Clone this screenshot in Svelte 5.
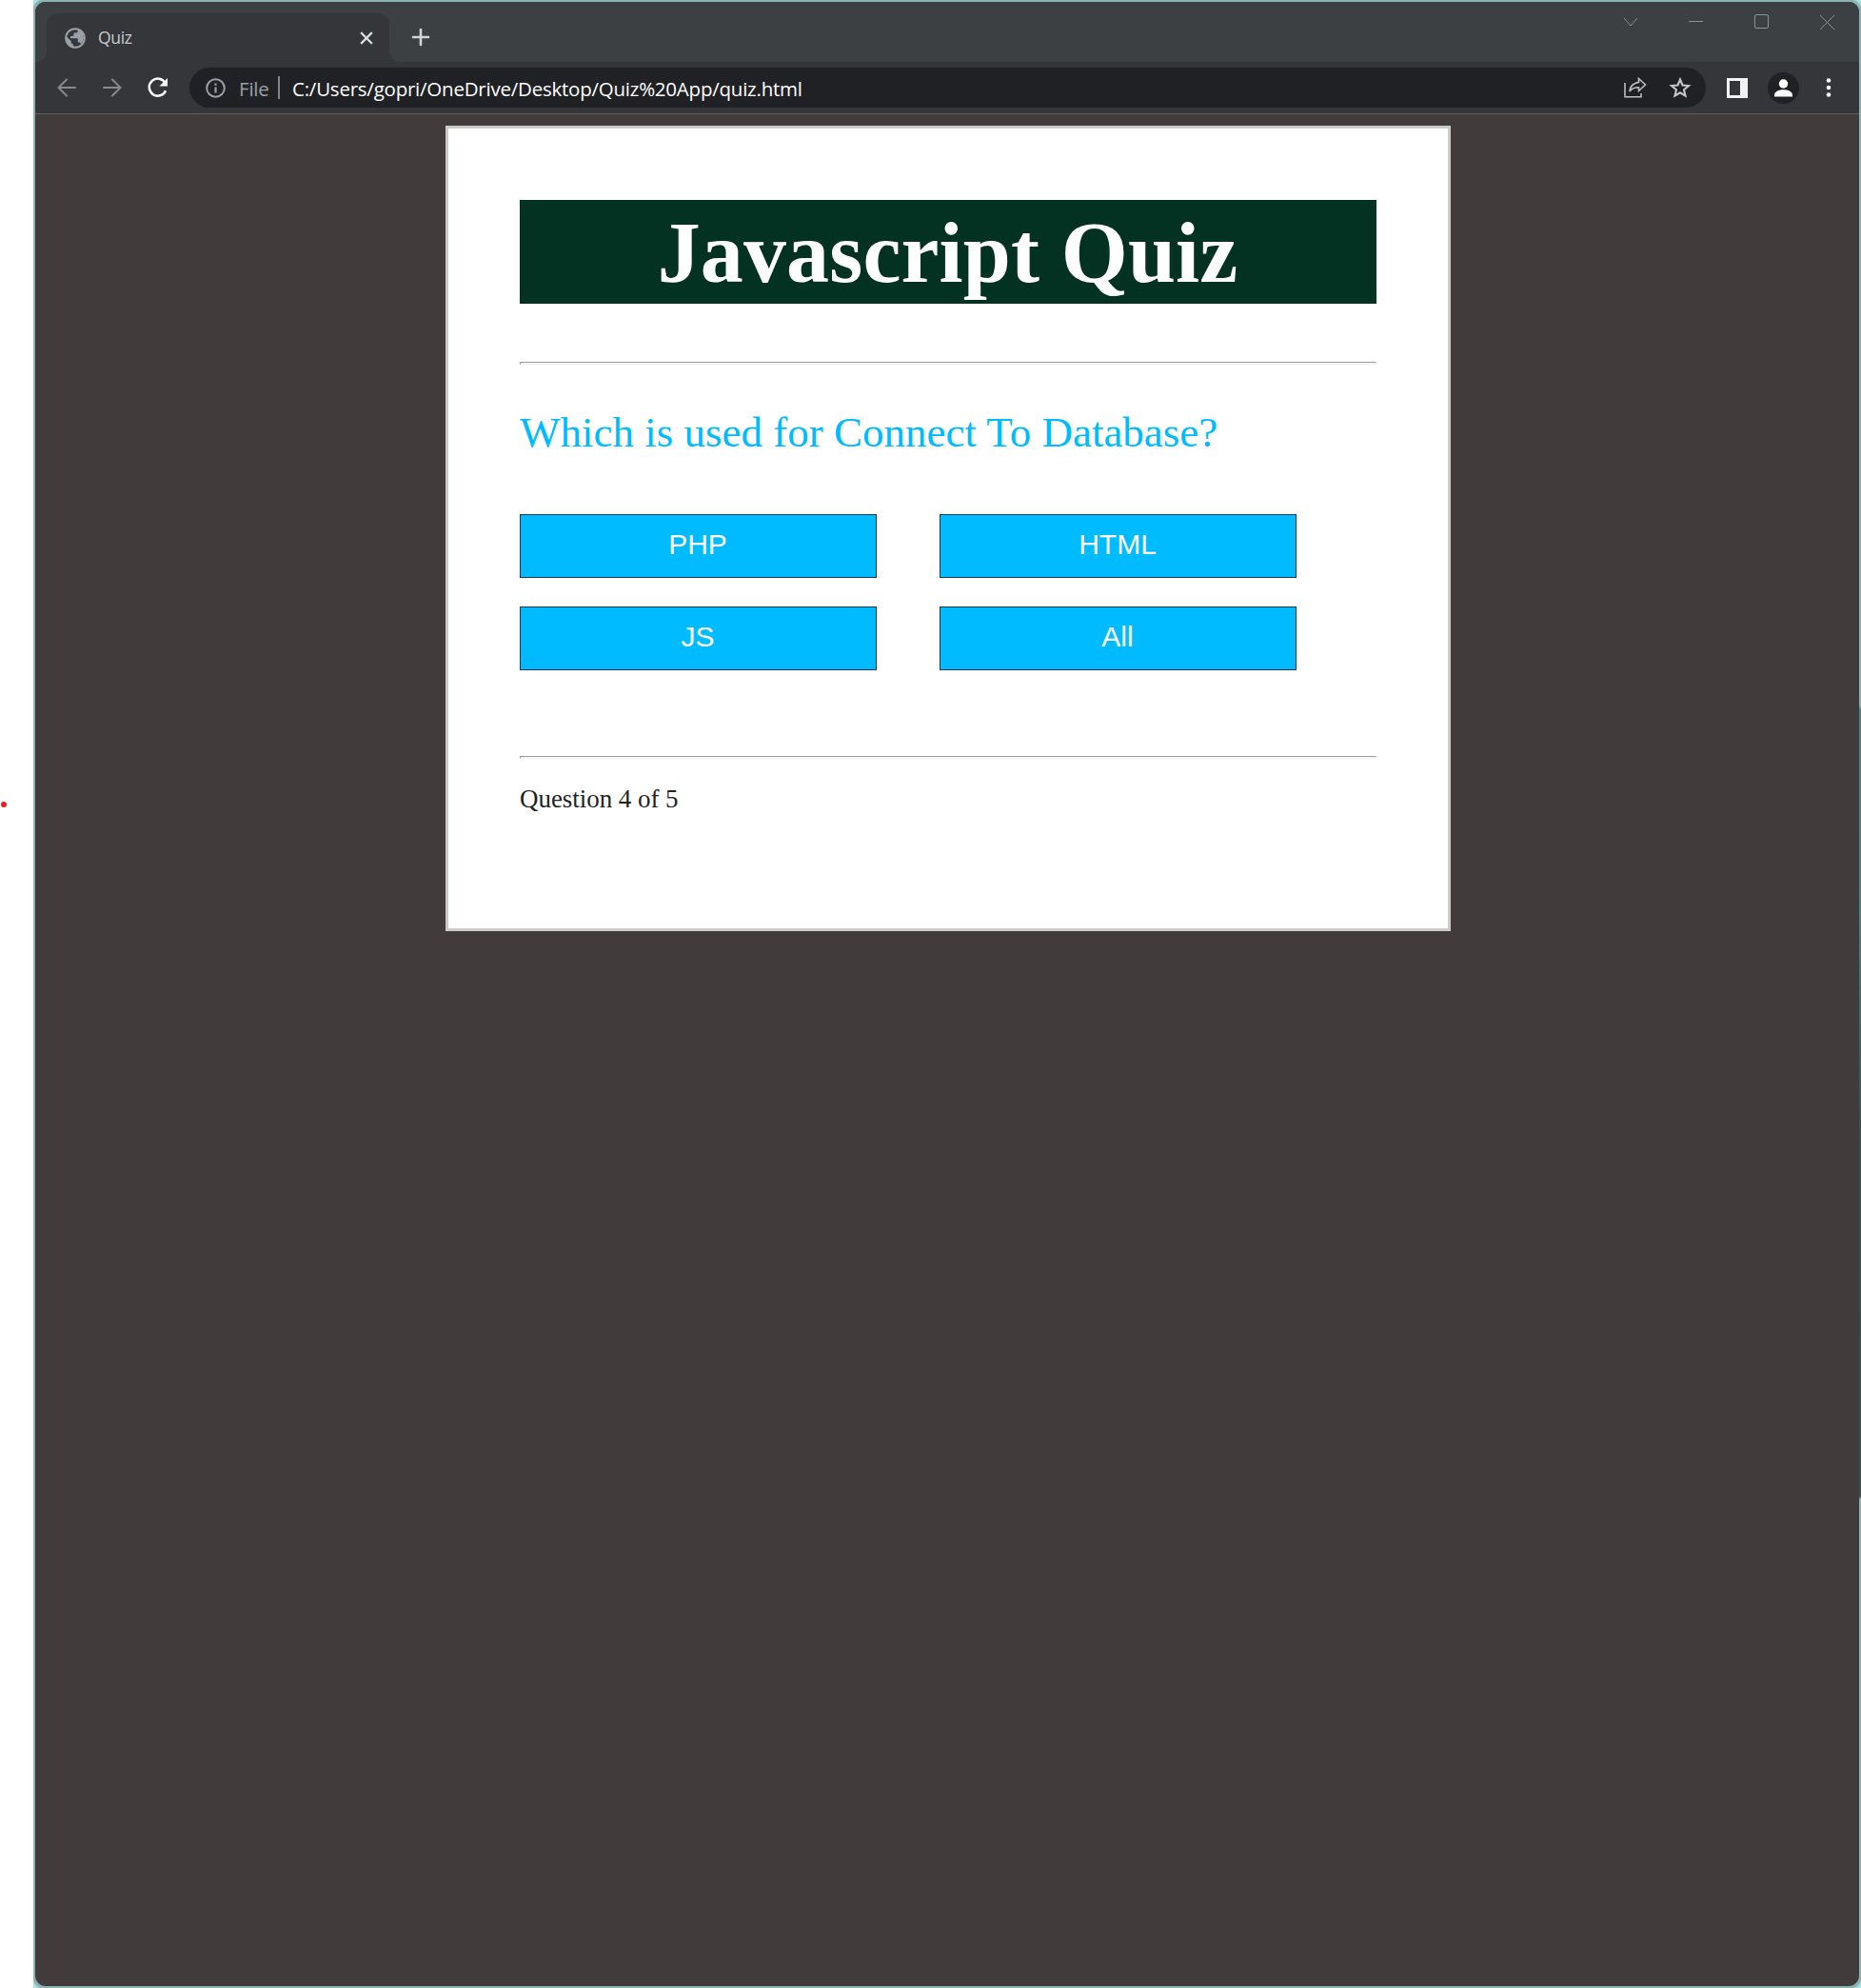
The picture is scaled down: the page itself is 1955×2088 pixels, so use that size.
<script>
  const options = ['PHP', 'HTML', 'JS', 'All'];
</script>

<div class="desktop">
  <span class="dot"></span>
  <div class="frame">
    <div class="window">
      <div class="tabs">
        <div class="tab">
          <svg class="globe" width="22" height="22" viewBox="0 0 22 22">
            <circle cx="11" cy="11" r="9.8" fill="none" stroke="#9aa0a6" stroke-width="2" />
            <path fill="#9aa0a6" d="M13.8 1.2v2.2c0 1.3-1 2.2-2.2 2.2H9.4v2.2c0 .7-.5 1.2-1.2 1.2H6v2.2h6.6c.7 0 1.2.5 1.2 1.1v3.3h1.1c1.1 0 1.9.7 2.2 1.6A9.9 9.9 0 0 0 13.8 1.2zM1.3 8.8l5.4 5.4v1c0 1.3 1 2.2 2.2 2.2v3.4A10 10 0 0 1 1.3 8.8z" />
          </svg>
          <span class="tab-title">Quiz</span>
          <svg class="close" width="12" height="12" viewBox="0 0 12 12"><path d="M1 1l10 10M11 1L1 11" stroke="#dadce0" stroke-width="2.3" stroke-linecap="square" /></svg>
        </div>
        <svg class="plus" width="18" height="18" viewBox="0 0 18 18"><path d="M9 1v16M1 9h16" stroke="#d2d4d6" stroke-width="2.6" stroke-linecap="round" /></svg>
        <svg class="controls" width="222" height="18" viewBox="0 0 222 18" fill="none" stroke="#8f9294" stroke-width="1">
          <path d="M1 5l7 8 7-8" />
          <path d="M69 8.5h15" />
          <rect x="138.5" y="1.5" width="14" height="14" rx="1.5" />
          <path d="M207 2l15 15M222 2l-15 15" />
        </svg>
      </div>

      <div class="toolbar">
        <svg class="back" width="20" height="20" viewBox="0 0 20 20"><path d="M19 10H2M10 1.5L1.5 10l8.500 8.500" fill="none" stroke="#87898c" stroke-width="2" stroke-linecap="round" /></svg>
        <svg class="forward" width="20" height="20" viewBox="0 0 20 20"><path d="M1 10h17M10 1.500l8.500 8.500-8.500 8.500" fill="none" stroke="#87898c" stroke-width="2" stroke-linecap="round" /></svg>
        <svg class="reload" width="22" height="22" viewBox="0 0 22 22">
          <path d="M18.600 6.200A9 9 0 1 0 19 14.200" fill="none" stroke="#fff" stroke-width="2.500" />
          <path d="M21 1v8.500h-8.500z" fill="#fff" />
        </svg>
        <div class="address">
          <svg class="info" width="21" height="21" viewBox="0 0 21 21">
            <circle cx="10.500" cy="10.500" r="9.300" fill="none" stroke="#9aa0a6" stroke-width="2" />
            <path d="M10.500 9.500v6M10.500 5.500v2.200" stroke="#9aa0a6" stroke-width="2.200" />
          </svg>
          <span class="file">File</span>
          <span class="divider"></span>
          <span class="url">C:/Users/gopri/OneDrive/Desktop/Quiz%20App/quiz.html</span>
          <svg class="share" width="24" height="22" viewBox="0 0 24 22" fill="none" stroke="#bdbebf" stroke-width="1.600">
            <path d="M1 6v14.800h17v-3.800" />
            <path d="M15.500 1.500L22.500 8l-7 6.500v-3.700c-4.500 0-7.500 1.200-9.700 4.200.8-5 4-8.700 9.700-9.600z" />
          </svg>
          <svg class="star" width="24" height="24" viewBox="0 0 24 24"><path d="M12 3.500l2.500 6 6.500.500-5 4.300 1.500 6.300-5.500-3.300-5.500 3.300 1.500-6.300-5-4.300 6.500-.500z" fill="none" stroke="#c6c7c8" stroke-width="2.100" /></svg>
        </div>
        <svg class="panel" width="22" height="21" viewBox="0 0 22 21"><path fill="#f1f3f4" fill-rule="evenodd" d="M0 0h22v21H0zM3 3v15h11V3z" /></svg>
        <svg class="avatar" width="33" height="33" viewBox="0 0 33 33">
          <circle cx="16.500" cy="16.500" r="16.500" fill="#202124" />
          <circle cx="16.500" cy="12" r="4.700" fill="#fff" />
          <path d="M7 25.500v-1.700c0-3.700 5-5.500 9.500-5.500s9.500 1.800 9.500 5.500v1.700z" fill="#fff" />
        </svg>
        <svg class="menu" width="6" height="20" viewBox="0 0 6 20" fill="#fff"><circle cx="3" cy="2.500" r="2.300" /><circle cx="3" cy="10" r="2.300" /><circle cx="3" cy="17.500" r="2.300" /></svg>
      </div>

      <main class="page">
        <section class="card">
          <h1>Javascript Quiz</h1>
          <hr class="first" />
          <p class="question">Which is used for Connect To Database?</p>
          <div class="options">
            {#each options as option}
              <button>{option}</button>
            {/each}
          </div>
          <hr class="second" />
          <p class="progress">Question 4 of 5</p>
        </section>
      </main>
    </div>
  </div>
</div>

<style>
  :global(body) { margin: 0; background: #fff; }
  * { box-sizing: border-box; }
  svg { display: block; flex: none; overflow: visible; }
  .desktop { position: relative; width: 1955px; height: 2088px; padding-left: 35px; background: #fff; overflow: hidden; }
  .dot { position: absolute; left: 1px; top: 842px; width: 6px; height: 6px; border-radius: 50%; background: #ed1c24; }
  .frame {
    height: 2088px;
    padding: 2px;
    background:
      radial-gradient(circle at 12px 12px, #8bb2b1 12px, #a4e6e4 14px) left top / 12px 12px no-repeat,
      radial-gradient(circle at 0 12px, #8bb2b1 12px, #a4e6e4 14px) right top / 12px 12px no-repeat,
      radial-gradient(circle at 12px 0, #8bb2b1 12px, #a4e6e4 14px) left bottom / 12px 12px no-repeat,
      radial-gradient(circle at 0 0, #8bb2b1 12px, #a4e6e4 14px) right bottom / 12px 12px no-repeat,
      linear-gradient(#8bb2b1 0 741px, #508482 745px, #4d8582 950px, #3c6462 1100px, #34514f 1200px, #34504e 1571px, #8bb2b1 1575px) right / 2px 100% no-repeat,
      #8bb2b1;
  }
  .window { height: 2084px; border-radius: 11px; overflow: hidden; background: #413c3b; font-family: "Open Sans", "Noto Sans", sans-serif; }
  .tabs { height: 63px; padding: 12px 0 0 12px; display: flex; align-items: flex-start; background: #3c4043; }
  .tab { position: relative; width: 360px; height: 51px; padding: 0 18px 0 19px; display: flex; align-items: center; background: #35363a; border-radius: 12px 12px 0 0; }
  .tab::before, .tab::after { content: ""; position: absolute; bottom: 0; width: 12px; height: 12px; }
  .tab::before { left: -12px; background: radial-gradient(circle at 0 0, transparent 11.500px, #35363a 12.500px); }
  .tab::after { right: -12px; background: radial-gradient(circle at 100% 0, transparent 11.500px, #35363a 12.500px); }
  .tab-title { margin-left: 13px; padding-bottom: 2px; font-size: 17.500px; line-height: 24px; letter-spacing: -0.300px; color: #c9cbce; flex: 1; }
  .plus { margin: 16px 0 0 24px; }
  .controls { margin: 0 26px 0 auto; }
  .toolbar { height: 55px; padding: 0 29px 0 23px; display: flex; align-items: center; background: #35363a; border-bottom: 1px solid #616161; }
  .back { margin-right: 28px; }
  .reload { margin-left: 27px; }
  .address { width: 1593px; height: 42px; margin-left: 22px; padding: 0 15px 0 17px; display: flex; align-items: center; border-radius: 21px; background: #202124; }
  .file { width: 31px; margin-left: 14px; padding-top: 1px; font-size: 20.500px; line-height: 28px; letter-spacing: -0.200px; color: #9aa0a6; white-space: nowrap; }
  .divider { width: 2px; height: 24px; margin: 0 13px 0 10px; background: #80868b; }
  .url { padding-top: 1px; font-size: 20.500px; line-height: 28px; letter-spacing: -0.230px; color: #fff; white-space: nowrap; }
  .share { margin-left: auto; }
  .star { margin-left: 23px; }
  .panel { margin-left: 22px; }
  .avatar { margin-left: 21px; }
  .menu { margin-left: auto; }
  .page { padding: 12px 0 0 431px; }
  .card { width: 1056px; height: 846px; padding: 75px; border: 3px solid #cbcbcb; background: #fff; font-family: "Liberation Serif", serif; }
  h1 { height: 109px; margin: 0; padding-right: 1px; background: #033122; color: #fff; font-size: 90px; line-height: 111px; letter-spacing: 0.150px; text-align: center; }
  hr { height: 3px; margin: 0; border: 1px solid #999; border-right-color: #eee; border-bottom-color: #eee; }
  .first { margin-top: 61px; }
  .question { margin: 45px 0 0; font-size: 45px; line-height: 52px; color: #0bf; white-space: nowrap; }
  .options { width: 816px; margin-top: 60px; display: grid; grid-template-columns: 375px 375px; column-gap: 66px; row-gap: 30px; }
  button { height: 67px; padding: 0 1px 3px 0; border: 1px solid #1d3557; background: #0bf; color: #fff; font: 30px "Liberation Sans", sans-serif; }
  .second { margin-top: 90px; }
  .progress { margin: 27px 0 0; font-size: 27px; line-height: 31px; letter-spacing: -0.050px; color: #222; }
</style>
